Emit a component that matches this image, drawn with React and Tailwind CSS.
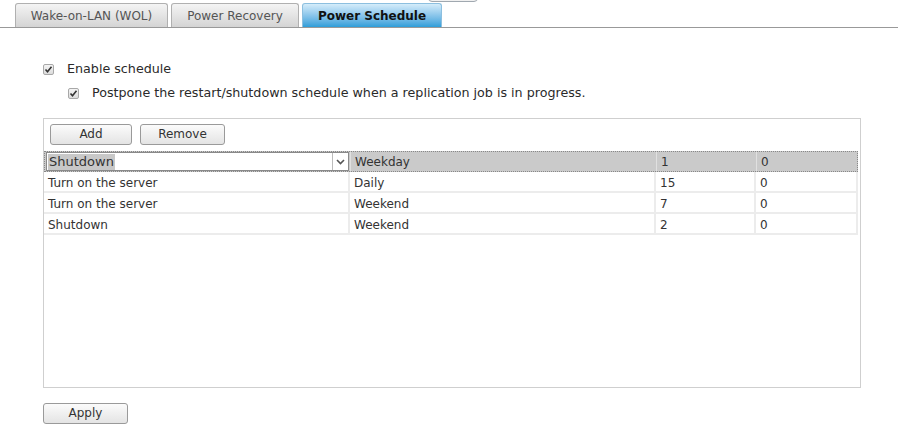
import React from "react";

function Check({ className = "" }) {
  return (
    <span className={"inline-flex h-[11px] w-[11px] items-center justify-center rounded-[2px] border border-[#a8a8a8] bg-gradient-to-b from-[#f4f4f4] to-[#dcdcdc] " + className}>
      <svg width="9" height="9" viewBox="0 0 9 9">
        <path d="M1.5 4.5 L3.5 6.8 L7.5 1.8" fill="none" stroke="#333" strokeWidth="1.6" />
      </svg>
    </span>
  );
}

function Btn({ children, w }) {
  return (
    <button className={"h-[21px] rounded-[3px] border border-[#9a9a9a] bg-gradient-to-b from-[#fbfbfb] to-[#e4e4e4] text-[12px] leading-[19px] text-[#333] " + w}>
      {children}
    </button>
  );
}

const rows = [
  ["Turn on the server", "Daily", "15", "0"],
  ["Turn on the server", "Weekend", "7", "0"],
  ["Shutdown", "Weekend", "2", "0"],
];

export default function App() {
  return (
    <div className="h-[428px] w-[898px] overflow-hidden bg-white text-[12px] text-[#2a2a2a]" style={{ fontFamily: '"DejaVu Sans", Verdana, sans-serif' }}>
      {/* tab bar */}
      <div className="relative flex h-[28px] items-end gap-[3px] border-b border-[#999] pl-[15px]">
        <div className="flex h-[24px] w-[153px] items-center justify-center rounded-t-[3px] border border-b-0 border-[#b0b0b0] bg-gradient-to-b from-[#f4f4f4] to-[#d4d4d4] text-[#555]">Wake-on-LAN (WOL)</div>
        <div className="flex h-[24px] w-[128px] items-center justify-center rounded-t-[3px] border border-b-0 border-[#b0b0b0] bg-gradient-to-b from-[#f4f4f4] to-[#d4d4d4] text-[#555]">Power Recovery</div>
        <div className="flex h-[24px] w-[140px] items-center justify-center rounded-t-[3px] border border-b-0 border-[#8cbfdf] bg-gradient-to-b from-[#d4ecfa] to-[#2c9ed9] font-bold text-[#111]">Power Schedule</div>
        <div className="absolute left-[428px] top-[-6px] h-[8px] w-[50px] rounded-b-[4px] border border-[#a0a8b0] bg-[#f0f0f0]" />
      </div>

      <div className="pl-[43px] pt-[33px]">
        <div className="flex h-[16px] items-center gap-[13px]">
          <Check />
          <span className="text-[12.7px] leading-[16px]">Enable schedule</span>
        </div>
        <div className="mt-[8px] flex h-[16px] items-center gap-[13px] pl-[25px]">
          <Check />
          <span className="text-[12.7px] leading-[16px]">Postpone the restart/shutdown schedule when a replication job is in progress.</span>
        </div>

        <div className="mt-[17px] flex h-[270px] w-[818px] flex-col border border-[#cfcfcf]">
          <div className="flex gap-[8px] pl-[6px] pt-[5px]">
            <Btn w="w-[82px]">Add</Btn>
            <Btn w="w-[85px]">Remove</Btn>
          </div>
          <div className="mt-[6px] w-[814px] text-[#333]">
            <div className="flex h-[21px] border border-dotted border-[#888] bg-[#cacaca]">
              <div className="flex w-[306px] items-center border-r border-[#e0e0e0] p-[1px]">
                <div className="flex h-[19px] w-full items-center border border-[#8a8a8a] bg-white">
                  <span className="ml-[1px] bg-[#c8c8c8] px-[1px] text-[13px] leading-[16px]">Shutdown</span>
                  <span className="ml-auto flex h-full w-[16px] items-center justify-center border-l border-[#bbb]">
                    <svg width="9" height="6" viewBox="0 0 9 6"><path d="M1 1 L4.5 4.5 L8 1" fill="none" stroke="#555" strokeWidth="1.6" /></svg>
                  </span>
                </div>
              </div>
              <div className="flex w-[306px] items-center border-r border-[#e0e0e0] pl-[4px] pt-[1px]">Weekday</div>
              <div className="flex w-[100px] items-center border-r border-[#e0e0e0] pl-[4px] pt-[1px]">1</div>
              <div className="flex flex-1 items-center pl-[4px] pt-[1px]">0</div>
            </div>
            {rows.map((r, i) => (
              <div key={i} className="flex h-[21px] border-b-2 border-[#ececec] bg-white">
                <div className="flex w-[306px] items-center border-r-2 border-[#ececec] pl-[4px] pt-[2px]">{r[0]}</div>
                <div className="flex w-[306px] items-center border-r-2 border-[#ececec] pl-[4px] pt-[2px]">{r[1]}</div>
                <div className="flex w-[100px] items-center border-r-2 border-[#ececec] pl-[4px] pt-[2px]">{r[2]}</div>
                <div className="flex flex-1 items-center border-r-2 border-[#ececec] pl-[4px] pt-[2px]">{r[3]}</div>
              </div>
            ))}
          </div>
        </div>

        <div className="mt-[15px]">
          <Btn w="w-[85px]">Apply</Btn>
        </div>
      </div>
    </div>
  );
}
